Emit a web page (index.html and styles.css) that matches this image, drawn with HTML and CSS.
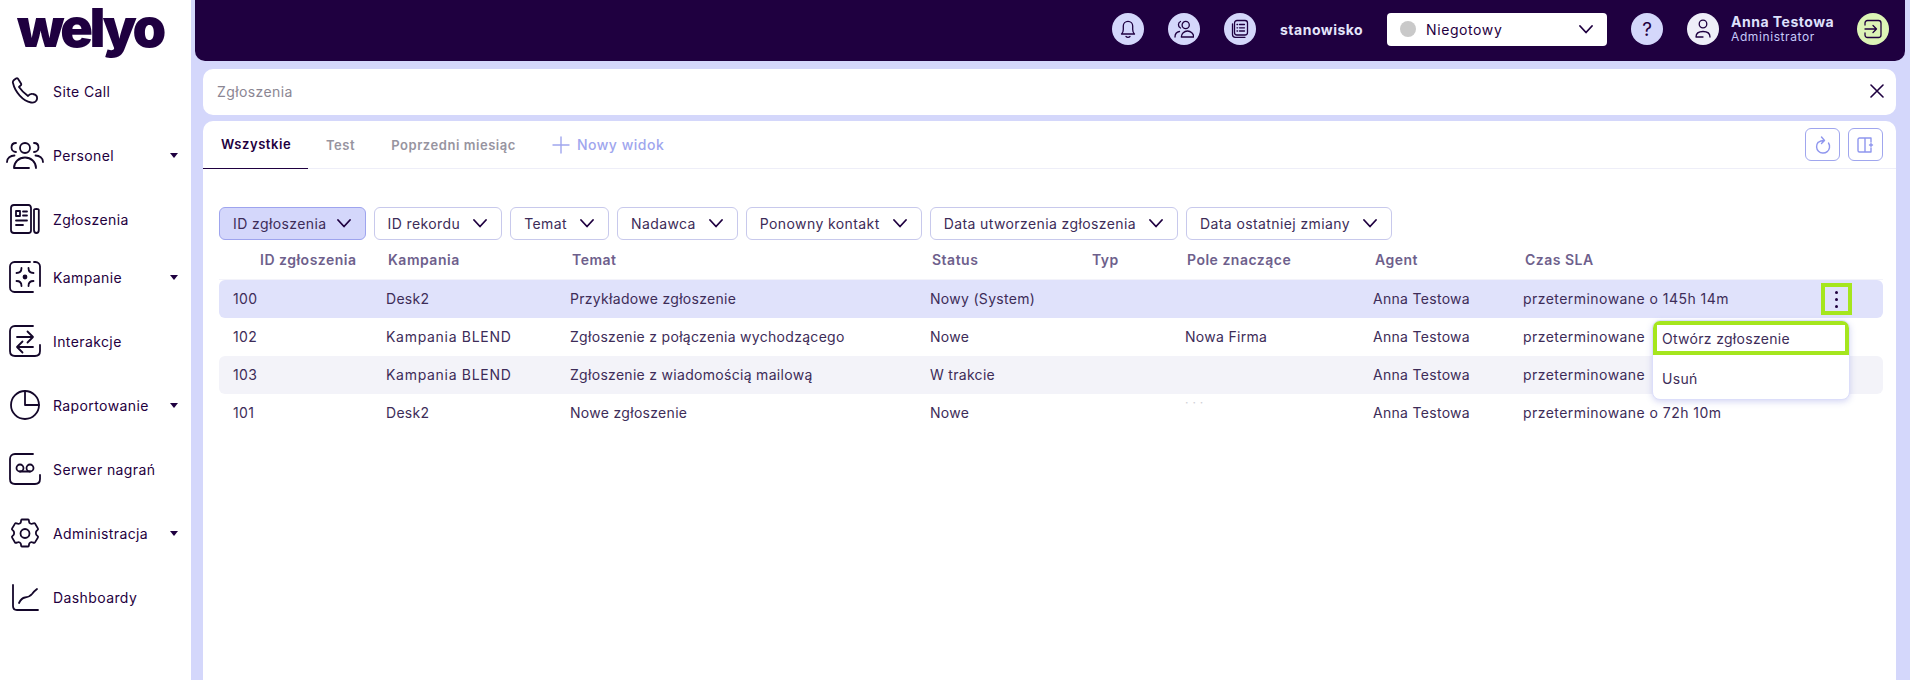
FILE: index.html
```html
<!DOCTYPE html>
<html lang="pl">
<head>
<meta charset="utf-8">
<title>Zgłoszenia</title>
<link rel="stylesheet" href="styles.css">
</head>
<body>
<div class="app">
  <aside class="sidebar">
    <div class="logo">welyo</div>
    <nav class="nav">
      <a class="nav-item"><span class="nav-icon"><svg width="28" height="28" viewBox="0 0 28 28"><path d="M2 6C1.500 5 2 4 3 3L5 1.500C6 1 7 1.500 7.500 2.500L10 6.500C10.500 7.500 10 8.500 9 9L8 10C10 13 13 16 17 19C18 17.500 20 16.500 22 17C25 17.500 26.500 19 26 22C25.500 25 23 26 20 25.500C12 24 4 15 2 6z"/></svg></span><span class="nav-label">Site Call</span></a>
      <a class="nav-item"><span class="nav-icon"><svg width="38" height="28" viewBox="0 0 38 28"><circle cx="19" cy="7" r="5"/><path d="M10 2c-3 0-4.500 2-4.500 4.500S7.500 11 10 11M28 2c3 0 4.500 2 4.500 4.500S30.500 11 28 11M8 27c0-6 5-10.500 11-10.500S30 21 30 27M8 27h15M1 21c0-4 3.500-6.500 7.500-6.500M37 21c0-4-3.500-6.500-7.500-6.500"/></svg></span><span class="nav-label">Personel</span><span class="caret"></span></a>
      <a class="nav-item nav-item-tight"><span class="nav-icon"><svg width="30" height="30" viewBox="0 0 30 30"><path d="M21 26.500V4C21 2 20 1 18.500 1H4C2 1 1 2 1 4v22c0 2 1 3 3 3h14.500c1.500 0 2.500-1 2.500-2.500zM24 6c0-1.500 4.800-1.500 4.800 0v20c0 4-4.800 4-4.800 0z"/><path d="M6 7h4v5H6zM13 7.500h4M13 11.500h4M6 16.500h11M6 21h7"/></svg></span><span class="nav-label">Zgłoszenia</span></a>
      <a class="nav-item"><span class="nav-icon"><svg width="32" height="32" viewBox="0 0 32 32"><path d="M21 1H5.500C3 1 1 3 1 5.500v21C1 29 3 31 5.500 31H24M25 1h1.500C29 1 31 3 31 5.500V25"/><path d="M12.500 7c0 3-2 5-5 5M19.500 7c0 3 2 5 5 5M12.500 25c0-3-2-5-5-5M19.500 25c0-3 2-5 5-5"/><circle class="solid" cx="16" cy="16" r="1.500"/></svg></span><span class="nav-label">Kampanie</span><span class="caret"></span></a>
      <a class="nav-item"><span class="nav-icon"><svg width="32" height="32" viewBox="0 0 32 32"><path d="M24 1H6C3 1 1 3 1 6v20c0 3 2 5 5 5h20c3 0 5-2 5-5v-6"/><path d="M8 12h16M18.500 6.500 24 12l-5.500 5.500M24 22H8M13.500 16.500 8 22l5.500 5.500"/></svg></span><span class="nav-label">Interakcje</span></a>
      <a class="nav-item"><span class="nav-icon"><svg width="30" height="30" viewBox="0 0 30 30"><circle cx="15" cy="15" r="14"/><path d="M15 1v14h14"/></svg></span><span class="nav-label">Raportowanie</span><span class="caret"></span></a>
      <a class="nav-item"><span class="nav-icon"><svg width="32" height="32" viewBox="0 0 32 32"><path d="M24 1H6C3 1 1 3 1 6v20c0 3 2 5 5 5h20c3 0 5-2 5-5v-4"/><circle cx="11" cy="15" r="3.500"/><circle cx="21" cy="15" r="3.500"/><path d="M11 18.500h10"/></svg></span><span class="nav-label">Serwer nagrań</span></a>
      <a class="nav-item"><span class="nav-icon"><svg width="30" height="31" viewBox="0 0 30 31"><circle cx="15" cy="15.500" r="4.500"/><path d="M12 1.500h6c.8 0 1 1 1 2 0 1.800 2.200 3 3.700 2.100.9-.5 1.800-.8 2.300 0l3 5c.4.700-.2 1.300-1 1.800-1.500.9-1.500 4.300 0 5.200.8.500 1.400 1.100 1 1.800l-3 5c-.5.800-1.400.5-2.300 0-1.500-.9-3.700.3-3.700 2.100 0 1-.2 2-1 2h-6c-.8 0-1-1-1-2 0-1.800-2.200-3-3.700-2.100-.9.500-1.800.8-2.300 0l-3-5c-.4-.7.200-1.300 1-1.800 1.500-.9 1.500-4.300 0-5.200-.8-.5-1.400-1.100-1-1.800l3-5c.5-.8 1.400-.5 2.300 0C8.800 6.500 11 5.300 11 3.500c0-1 .2-2 1-2z"/></svg></span><span class="nav-label">Administracja</span><span class="caret"></span></a>
      <a class="nav-item"><span class="nav-icon"><svg width="27" height="27" viewBox="0 0 27 27"><path d="M1 1v21c0 2.500 1.500 4 4 4h21"/><path d="M7 19c1.500-3 3-5 6-5.500 4-.5 5-1 7-3.500 1.500-2 3-3.500 5-5"/></svg></span><span class="nav-label">Dashboardy</span></a>
    </nav>
  </aside>

  <main class="main">
    <header class="topbar">
      <span class="round"><svg width="20" height="20" viewBox="0 0 20 20"><path d="M3.500 15c1-.8 1.800-2.200 1.800-4.500V7a4.700 4.700 0 0 1 9.400 0v3.500c0 2.300.8 3.700 1.800 4.500zM8 17.500c1 1 3 1 4 0"/></svg></span>
      <span class="round"><svg width="20" height="20" viewBox="0 0 20 20"><circle cx="11.700" cy="6" r="3.600"/><path d="M6.500 2.500a3.600 3.600 0 0 0 0 6.500M7.300 18c0-3.500 3-6 6.200-6s6.200 2.500 6.200 6zM1 18c0-3 2-5 4.500-5.500"/></svg></span>
      <span class="round"><svg width="20" height="20" viewBox="0 0 20 20"><rect x="4.500" y="1.500" width="13" height="14.500" rx="2.500"/><path d="M2.500 5v10.500c0 1.700 1 2.800 2.800 2.800H15M9.500 5.500h5M9.500 8.800h5M9.500 12h5M7 5.500h.6M7 8.800h.6M7 12h.6"/></svg></span>
      <span class="station">stanowisko</span>
      <div class="status-select"><span class="status-dot"></span><span class="status-text">Niegotowy</span><svg class="chev" width="14" height="9" viewBox="0 0 14 9"><path d="M1 1l6 6.500L13 1"/></svg></div>
      <span class="round help">?</span>
      <span class="round avatar"><svg width="20" height="22" viewBox="0 0 20 22"><circle cx="10" cy="6" r="3.800"/><path d="M3 19c0-3.500 3-5.500 7-5.500s7 2 7 5.500M3 19h7"/></svg></span>
      <div class="user"><span class="user-name">Anna Testowa</span><span class="user-role">Administrator</span></div>
      <span class="round logout"><svg width="20" height="20" viewBox="0 0 20 20"><path d="M2 6V4c0-1.500 1-2.500 2.500-2.500h11C17 1.500 18 2.500 18 4v12c0 1.500-1 2.500-2.500 2.500h-11C3 18.500 2 17.500 2 16v-2M2 10h11.500M10 6.500l3.500 3.500-3.500 3.500"/></svg></span>
    </header>

    <div class="content">
      <div class="searchbar">
        <span class="search-text">Zgłoszenia</span>
        <svg class="close" width="14" height="14" viewBox="0 0 14 14"><path d="M1 1l12 12M13 1 1 13"/></svg>
      </div>

      <section class="card">
        <div class="tabs">
          <a class="tab tab-active">Wszystkie</a>
          <a class="tab tab-test">Test</a>
          <a class="tab tab-prev">Poprzedni miesiąc</a>
          <a class="tab-new"><svg width="18" height="18" viewBox="0 0 18 18"><path d="M9 1v16M1 9h16"/></svg>Nowy widok</a>
          <div class="tab-actions">
            <button class="icon-btn"><svg width="20" height="22" viewBox="0 0 20 22"><path d="M5 8.500a6.500 6.500 0 1 0 10.500 .5M5 8.500C7 7 8.500 6.500 11 6.500M8.500 3l3 3.500-3 3"/></svg></button>
            <button class="icon-btn"><svg width="20" height="20" viewBox="0 0 20 20"><path d="M15 7V3H3.500C2.700 3 2 3.700 2 4.500v11c0 .8.700 1.500 1.500 1.500H15v-4M9 3v14M15 8.500v3M13.500 10h3"/></svg></button>
          </div>
        </div>

        <div class="filters">
          <button class="filter filter-active">ID zgłoszenia<svg class="chev" width="14" height="9" viewBox="0 0 14 9"><path d="M1 1l6 6.500L13 1"/></svg></button>
          <button class="filter">ID rekordu<svg class="chev" width="14" height="9" viewBox="0 0 14 9"><path d="M1 1l6 6.500L13 1"/></svg></button>
          <button class="filter">Temat<svg class="chev" width="14" height="9" viewBox="0 0 14 9"><path d="M1 1l6 6.500L13 1"/></svg></button>
          <button class="filter">Nadawca<svg class="chev" width="14" height="9" viewBox="0 0 14 9"><path d="M1 1l6 6.500L13 1"/></svg></button>
          <button class="filter">Ponowny kontakt<svg class="chev" width="14" height="9" viewBox="0 0 14 9"><path d="M1 1l6 6.500L13 1"/></svg></button>
          <button class="filter">Data utworzenia zgłoszenia<svg class="chev" width="14" height="9" viewBox="0 0 14 9"><path d="M1 1l6 6.500L13 1"/></svg></button>
          <button class="filter">Data ostatniej zmiany<svg class="chev" width="14" height="9" viewBox="0 0 14 9"><path d="M1 1l6 6.500L13 1"/></svg></button>
        </div>

        <div class="table">
          <div class="row head">
            <span class="cell-id">ID zgłoszenia</span><span>Kampania</span><span>Temat</span><span>Status</span><span>Typ</span><span>Pole znaczące</span><span>Agent</span><span>Czas SLA</span><span></span>
          </div>
          <div class="row body-row selected">
            <span>100</span><span>Desk2</span><span>Przykładowe zgłoszenie</span><span>Nowy (System)</span><span></span><span></span><span>Anna Testowa</span><span class="sla">przeterminowane o 145h 14m</span>
            <span class="kebab-cell"><span class="kebab"><i></i><i></i><i></i></span></span>
          </div>
          <div class="row body-row">
            <span>102</span><span class="camp">Kampania BLEND</span><span>Zgłoszenie z połączenia wychodzącego</span><span>Nowe</span><span></span><span>Nowa Firma</span><span>Anna Testowa</span><span class="sla">przeterminowane</span><span></span>
          </div>
          <div class="row body-row alt">
            <span>103</span><span class="camp">Kampania BLEND</span><span>Zgłoszenie z wiadomością mailową</span><span>W trakcie</span><span></span><span></span><span>Anna Testowa</span><span class="sla">przeterminowane</span><span></span>
          </div>
          <div class="row body-row">
            <span>101</span><span>Desk2</span><span>Nowe zgłoszenie</span><span>Nowe</span><span></span><span class="faint">· · ·</span><span>Anna Testowa</span><span class="sla">przeterminowane o 72h 10m</span><span></span>
          </div>
          <div class="menu">
            <div class="menu-item menu-item-focus">Otwórz zgłoszenie</div>
            <div class="menu-item">Usuń</div>
          </div>
        </div>
      </section>
    </div>
  </main>
</div>
</body>
</html>
```

FILE: styles.css
```css
* { box-sizing: border-box; }

html, body {
  margin: 0;
  height: 680px;
  overflow: hidden;
}

body {
  font-family: Inter, "Noto Sans", sans-serif;
  font-size: 14px;
  letter-spacing: 0.4px;
  color: #3d2c58;
  background: #d4d7fb;
}

svg {
  display: block;
  fill: none;
  stroke: currentColor;
  stroke-width: 1.6;
  stroke-linecap: round;
  stroke-linejoin: round;
}

.app {
  display: flex;
  height: 680px;
}

/* Sidebar */
.sidebar {
  width: 191px;
  flex: none;
  background: #fff;
}

.logo {
  height: 59px;
  padding-left: 17px;
  font-size: 54px;
  line-height: 55px;
  font-weight: 900;
  letter-spacing: -3.6px;
  color: #1f0040;
}

.nav {
  display: flex;
  flex-direction: column;
}

.nav-item {
  display: flex;
  align-items: center;
  height: 64px;
  color: #1f0040;
  font-size: 14px;
}

.nav-item-tight { margin-bottom: -6px; }

.nav-icon {
  width: 53px;
  padding-right: 3px;
  flex: none;
  display: flex;
  justify-content: center;
  color: #14072a;
}

.nav-icon svg { stroke-width: 1.8; }
.nav-icon .solid { fill: currentColor; }

.nav-label { flex: 1; }

.caret {
  width: 0;
  height: 0;
  margin-right: 13px;
  border-left: 4px solid transparent;
  border-right: 4px solid transparent;
  border-top: 5px solid #1f0040;
}

/* Main */
.main {
  flex: 1;
  min-width: 0;
  margin-left: 4px;
  display: flex;
  flex-direction: column;
}

.topbar {
  height: 61px;
  margin-right: 5px;
  padding-right: 16px;
  padding-bottom: 3px;
  flex: none;
  display: flex;
  align-items: center;
  justify-content: flex-end;
  background: #1f0040;
  border-radius: 0 0 10px 10px;
}

.round {
  width: 32px;
  height: 32px;
  flex: none;
  border-radius: 50%;
  display: flex;
  align-items: center;
  justify-content: center;
  background: #d4d7fb;
  color: #1f0040;
  margin-right: 24px;
}

.round svg { stroke-width: 1.3; }

.station {
  width: 107px;
  font-size: 14px;
  font-weight: 700;
  letter-spacing: 0.5px;
  color: #e4e5fb;
}

.status-select {
  width: 220px;
  height: 33px;
  margin-right: 24px;
  padding: 0 14px 0 13px;
  display: flex;
  align-items: center;
  background: #fff;
  border-radius: 4px;
  color: #1f0040;
  letter-spacing: 0.6px;
}

.status-dot {
  width: 16px;
  height: 16px;
  margin-right: 10px;
  border-radius: 50%;
  background: #c9c9c9;
}

.status-text { flex: 1; }

.chev { flex: none; stroke-width: 1.8; color: #1f0040; }

.help { font-size: 19px; font-weight: 400; letter-spacing: 0; }

.avatar {
  background: #eeeef8;
  margin-right: 12px;
}

.user {
  width: 126px;
  display: flex;
  flex-direction: column;
}

.user-name {
  font-size: 14px;
  line-height: 16px;
  font-weight: 700;
  letter-spacing: 0.5px;
  color: #dfe1fc;
}

.user-role {
  font-size: 12px;
  line-height: 14px;
  letter-spacing: 0.6px;
  color: #c6cafa;
}

.logout {
  background: #dcf4b6;
  margin-right: 0;
}

.content {
  flex: 1;
  min-height: 0;
  padding: 8px 14px 0 8px;
  display: flex;
  flex-direction: column;
  gap: 6px;
}

.searchbar {
  height: 46px;
  padding: 0 12px 2px 14px;
  flex: none;
  display: flex;
  align-items: center;
  justify-content: space-between;
  background: #fff;
  border-radius: 10px;
}

.search-text { color: #8b8693; }
.close { color: #1f0040; }

.card {
  flex: 1;
  background: #fff;
  border-radius: 10px 10px 0 0;
}

/* Tabs */
.tabs {
  height: 48px;
  padding-right: 13px;
  display: flex;
  align-items: center;
  border-bottom: 1px solid #eeeef8;
}

.tab {
  height: 48px;
  display: flex;
  align-items: center;
  font-size: 13px;
  font-weight: 600;
  letter-spacing: 0.55px;
  color: #97949f;
}

.tab-active {
  width: 105px;
  padding-left: 18px;
  color: #1f0040;
  border-bottom: 1px solid #1f0040;
}

.tab-test { margin-left: 18px; }
.tab-prev { margin-left: 36px; }

.tab-new {
  margin-left: 36px;
  display: flex;
  align-items: center;
  gap: 7px;
  font-size: 14px;
  font-weight: 500;
  letter-spacing: 0.5px;
  color: #a0a6ee;
}

.tab-new svg { stroke-width: 1.4; }

.tab-actions {
  margin-left: auto;
  display: flex;
  gap: 8px;
}

.icon-btn {
  width: 35px;
  height: 33px;
  padding: 0;
  display: flex;
  align-items: center;
  justify-content: center;
  background: #fff;
  color: #8f96ee;
  border: 1px solid #a0a6ee;
  border-radius: 6px;
}

.icon-btn svg { stroke-width: 1.4; }

/* Filters */
.filters {
  margin-top: 38px;
  padding-left: 16px;
  display: flex;
  gap: 8px;
}

.filter {
  height: 33px;
  padding: 0 14px 0 13px;
  display: flex;
  align-items: center;
  gap: 13px;
  font: inherit;
  letter-spacing: 0.4px;
  color: #3d2c58;
  background: #fff;
  border: 1px solid #c8c9ec;
  border-radius: 6px;
}

.filter-active {
  gap: 10px;
  background: #d4d7fb;
  border-color: #9ea4ee;
}

/* Table */
.table {
  position: relative;
  margin: 0 13px 0 16px;
  letter-spacing: 0.3px;
}

.row {
  display: grid;
  grid-template-columns: 153px 184px 360px 160px 95px 188px 150px 1fr 62px;
  align-items: center;
}

.head {
  height: 40px;
  font-weight: 600;
  letter-spacing: 0.5px;
  color: #6e5f8c;
  border-bottom: 1px solid #f3f3fa;
}

.head span { padding-left: 16px; }
.head .cell-id { padding-left: 41px; }

.body-row {
  height: 38px;
  padding-bottom: 2px;
  border-radius: 6px;
}

.body-row > span { padding-left: 14px; white-space: nowrap; }

.sla { letter-spacing: 0.45px; }
.camp { letter-spacing: 0.7px; }

.selected { background: #e0e2fb; }
.alt { background: #f3f3f9; }

.body-row > .faint {
  color: #cfcfd6;
  font-size: 12px;
  line-height: 10px;
  align-self: start;
  padding-top: 4px;
}

.body-row > .kebab-cell { padding-left: 0; }

.kebab {
  width: 31px;
  height: 32px;
  margin-top: 2px;
  display: flex;
  flex-direction: column;
  align-items: center;
  justify-content: center;
  gap: 4px;
  border: 4px solid #a5e61e;
}

.kebab i {
  width: 3px;
  height: 3px;
  border-radius: 50%;
  background: #1f0040;
}

.menu {
  position: absolute;
  top: 80px;
  right: 33px;
  width: 198px;
  height: 80px;
  background: #fff;
  border-radius: 8px;
  border: 1px solid #dcdefa;
  box-shadow: 0 2px 6px rgba(120, 125, 220, 0.3);
  overflow: hidden;
}

.menu-item {
  height: 40px;
  padding-left: 9px;
  display: flex;
  align-items: center;
}

.menu-item-focus {
  height: 34px;
  margin-bottom: 3px;
  padding-left: 5px;
  border: 4px solid #a5e61e;
}
```
